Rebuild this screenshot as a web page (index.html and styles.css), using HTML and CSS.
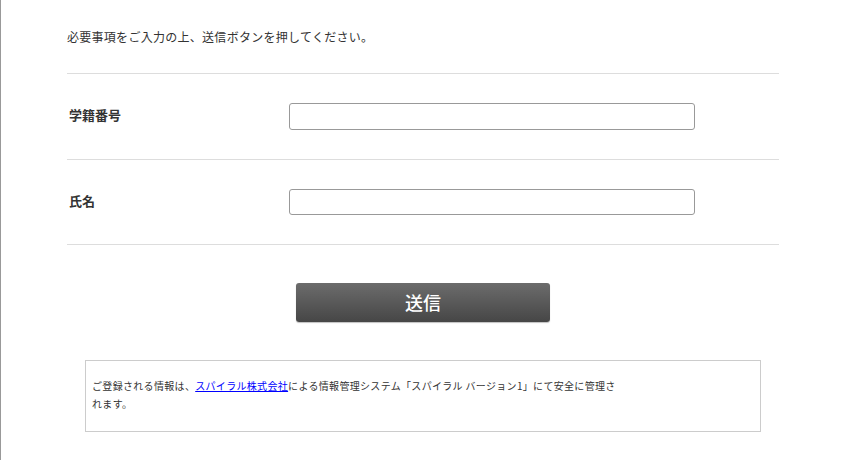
FILE: index.html
```html
<!DOCTYPE html>
<html lang="ja">
<head>
<meta charset="utf-8">
<title>フォーム</title>
<link rel="stylesheet" href="styles.css">
</head>
<body>
<div class="page">
  <div class="container">
    <p class="intro">必要事項をご入力の上、送信ボタンを押してください。</p>
    <div class="row">
      <div class="label">学籍番号</div>
      <div class="field"><input type="text" class="text-input"></div>
    </div>
    <div class="row">
      <div class="label">氏名</div>
      <div class="field"><input type="text" class="text-input small"></div>
    </div>
    <div class="actions">
      <button type="button" class="submit">送信</button>
    </div>
    <div class="notice">
      <p class="notice-text">ご登録される情報は、<a href="#">スパイラル株式会社</a>による情報管理システム「スパイラル バージョン1」にて安全に管理されます。</p>
    </div>
  </div>
</div>
</body>
</html>
```

FILE: styles.css
```css
html, body {
  margin: 0;
  padding: 0;
  background: #fff;
}
body {
  font-family: "Noto Sans CJK JP", "Noto Sans", sans-serif;
  color: #333;
}
.page {
  border-left: 1px solid #999;
  min-height: 460px;
  box-sizing: border-box;
}
.container {
  width: 712px;
  margin-left: 66px;
  padding-top: 28px;
}
.intro {
  margin: 0;
  font-size: 12px;
  line-height: 18px;
  letter-spacing: 0.28px;
  padding-bottom: 27px;
  border-bottom: 1px solid #ddd;
}
.row {
  display: flex;
  align-items: center;
  padding: 29px 0;
  border-bottom: 1px solid #ddd;
}
.label {
  width: 220px;
  padding-left: 2px;
  margin-top: -3px;
  font-size: 13px;
  font-weight: bold;
  color: #333;
  line-height: 18px;
}
.field {
  display: flex;
}
.text-input {
  width: 406px;
  height: 27px;
  box-sizing: border-box;
  border: 1px solid #999;
  border-radius: 3px;
  padding: 2px 6px;
  font-size: 13px;
  background: #fff;
  outline: none;
}
.text-input.small {
  height: 26px;
}
.actions {
  display: flex;
  justify-content: center;
  padding-top: 38px;
}
.submit {
  width: 254px;
  height: 39px;
  border: none;
  border-radius: 3px;
  background: linear-gradient(#6c6c6c, #464646);
  box-shadow: 0 1px 1px rgba(0, 0, 0, 0.25);
  color: #fff;
  font-family: "Noto Sans CJK JP", sans-serif;
  font-size: 18px;
  font-weight: 500;
  line-height: 39px;
  padding: 0;
  cursor: pointer;
}
.notice {
  width: 676px;
  margin: 38px auto 0;
  box-sizing: border-box;
  height: 72px;
  border: 1px solid #ccc;
  padding: 16px 6px;
}
.notice-text {
  margin: 0;
  width: 532px;
  font-size: 10px;
  line-height: 18px;
  letter-spacing: 0.32px;
  color: #333;
}
.notice-text a {
  color: #00f;
  text-decoration: underline;
}
```
